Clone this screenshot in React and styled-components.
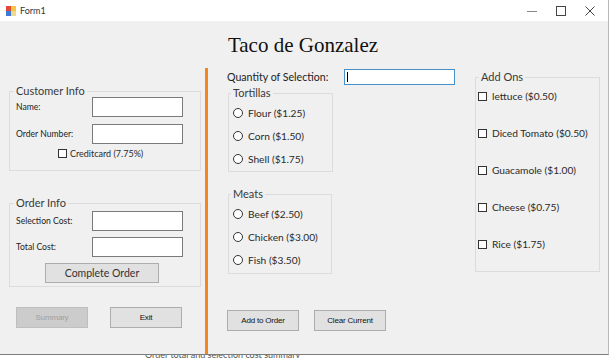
import React from 'react'
import styled, { createGlobalStyle } from 'styled-components'

const GlobalStyle = createGlobalStyle`
  body {
    margin: 0;
    background: #ffffff;
    font-family: Lato, "Open Sans", sans-serif;
  }
`

const Window = styled.div`
  width: 608px;
  height: 354px;
  display: flex;
  flex-direction: column;
  border-right: 1px solid #b9b9b9;
  border-bottom: 1px solid #7c7c7c;
`

const TitleBar = styled.div`
  height: 21px;
  flex: none;
  background: #ffffff;
  display: flex;
  align-items: center;
  padding-left: 6px;
  font-size: 9px;
  color: #333;
`

const TitleText = styled.span`
  margin-left: 4px;
  flex: 1;
`

const WinButton = styled.div`
  width: 29px;
  height: 21px;
  display: flex;
  align-items: center;
  justify-content: center;
  margin-right: ${p => p.$last ? '4px' : '0'};
`

const Content = styled.div`
  flex: 1;
  background: #f0f0f0;
  display: flex;
  flex-direction: column;
  padding-top: 12px;
  min-height: 0;
`

const Heading = styled.h1`
  margin: 0;
  text-align: center;
  font-family: "Liberation Serif", "Times New Roman", serif;
  font-weight: normal;
  font-size: 21px;
  line-height: 24px;
  color: #111;
  padding-right: 2px;
`

const MainRow = styled.div`
  flex: 1;
  display: flex;
  margin-top: 11px;
`

const LeftColumn = styled.div`
  width: 192px;
  margin-left: 9px;
  display: flex;
  flex-direction: column;
`

const Divider = styled.div`
  width: 3px;
  margin-left: 4px;
  background: #f5861f;
`

const MiddleColumn = styled.div`
  width: 229px;
  margin-left: 19px;
  display: flex;
  flex-direction: column;
`

const RightColumn = styled.div`
  margin-left: 19px;
  margin-top: 3px;
`

const Group = styled.fieldset`
  margin: ${p => p.$top || 0}px 0 0 ${p => p.$left || 0}px;
  width: ${p => p.$width}px;
  box-sizing: border-box;
  border: 1px solid #dcdcdc;
  padding: ${p => p.$pad || '0 0 0 6px'};
  display: flex;
  flex-direction: column;
  gap: ${p => p.$gap || 0}px;
`

const Legend = styled.legend`
  padding: 0 2px;
  margin-left: ${p => p.$left ?? -2}px;
  font-size: 11px;
  line-height: 12px;
  color: #3a3a3a;
`

const FieldRow = styled.div`
  display: flex;
  align-items: center;
  margin-top: ${p => p.$top || 0}px;
`

const FieldLabel = styled.span`
  width: ${p => p.$width || 76}px;
  font-size: ${p => p.$size || 8.6}px;
  color: #222;
`

const TextBox = styled.div`
  width: ${p => p.$width || 91}px;
  height: ${p => p.$height || 20}px;
  box-sizing: border-box;
  background: #fff;
  border: 1px solid ${p => p.$focus ? '#4a90c8' : '#7a7a7a'};
  position: relative;
  ${p => p.$focus && `
    &::after {
      content: '';
      position: absolute;
      left: 2px;
      top: 2px;
      bottom: 2px;
      width: 1px;
      background: #000;
    }
  `}
`

const Option = styled.label`
  display: flex;
  align-items: center;
  height: 14px;
  gap: ${p => p.$gap || 5}px;
  font-size: ${p => p.$size || 10.2}px;
  color: #2a2a2a;
  white-space: nowrap;
  padding-left: ${p => p.$indent || 0}px;
  margin-top: ${p => p.$top || 0}px;
`

const CheckBox = styled.span`
  width: 9px;
  height: 9px;
  box-sizing: border-box;
  border: 1px solid #333;
  background: #fff;
  flex: none;
`

const Radio = styled.span`
  width: 10px;
  height: 10px;
  box-sizing: border-box;
  border: 1px solid #333;
  border-radius: 50%;
  background: #fff;
  flex: none;
`

const Button = styled.div`
  width: ${p => p.$width || 72}px;
  height: ${p => p.$height || 21}px;
  box-sizing: border-box;
  display: flex;
  align-items: center;
  justify-content: center;
  background: ${p => p.$disabled ? '#cccccc' : '#e1e1e1'};
  border: 1px solid ${p => p.$disabled ? '#bfbfbf' : '#adadad'};
  color: ${p => p.$disabled ? '#a0a0a0' : p.$big ? '#333' : '#111'};
  font-family: ${p => p.$big ? 'Lato, "Open Sans", sans-serif' : '"Liberation Sans", Arial, sans-serif'};
  font-size: ${p => p.$big ? 10.5 : 8}px;
  letter-spacing: ${p => p.$big ? '0' : '-0.2px'};
  margin-left: ${p => p.$left || 0}px;
  margin-top: ${p => p.$top || 0}px;
`

const ButtonRow = styled.div`
  display: flex;
  gap: ${p => p.$gap}px;
  margin-top: ${p => p.$top}px;
  padding-left: ${p => p.$left || 0}px;
`

const BelowStrip = styled.div`
  height: 3px;
  overflow: hidden;
  padding-left: 145px;
  font-size: 9px;
  line-height: 9px;
  color: #555;
  & span {
    display: block;
    margin-top: -5px;
  }
`

const AppIcon = () => (
  <svg width="10" height="10" viewBox="0 0 10 10">
    <rect x="0" y="0" width="5" height="5" fill="#e2483a" />
    <rect x="5" y="0" width="5" height="5" fill="#f4c443" />
    <rect x="0" y="5" width="5" height="5" fill="#3d7ad6" />
    <rect x="5" y="5" width="5" height="5" fill="#f0d98a" />
  </svg>
)

const tortillas = ['Flour ($1.25)', 'Corn ($1.50)', 'Shell ($1.75)']
const meats = ['Beef ($2.50)', 'Chicken ($3.00)', 'Fish ($3.50)']
const addOns = ['lettuce ($0.50)', 'Diced Tomato ($0.50)', 'Guacamole ($1.00)', 'Cheese ($0.75)', 'Rice ($1.75)']

export default function App() {
  return (
    <>
      <GlobalStyle />
      <Window>
        <TitleBar>
          <AppIcon />
          <TitleText>Form1</TitleText>
          <WinButton>
            <svg width="10" height="10" viewBox="0 0 10 10"><path d="M0 5.5h10" stroke="#888" strokeWidth="1" /></svg>
          </WinButton>
          <WinButton>
            <svg width="10" height="10" viewBox="0 0 10 10"><rect x="0.5" y="0.5" width="9" height="9" fill="none" stroke="#444" strokeWidth="1" /></svg>
          </WinButton>
          <WinButton $last>
            <svg width="10" height="10" viewBox="0 0 10 10"><path d="M0.5 0.5l9 9M9.5 0.5l-9 9" stroke="#444" strokeWidth="1" /></svg>
          </WinButton>
        </TitleBar>
        <Content>
          <Heading>Taco de Gonzalez</Heading>
          <MainRow>
            <LeftColumn>
              <Group $width={192} $top={17} $pad="0 0 10px 6px">
                <Legend>Customer Info</Legend>
                <FieldRow>
                  <FieldLabel>Name:</FieldLabel>
                  <TextBox />
                </FieldRow>
                <FieldRow $top={7}>
                  <FieldLabel>Order Number:</FieldLabel>
                  <TextBox />
                </FieldRow>
                <Option $indent={42} $gap={3} $size={9} $top={2}>
                  <CheckBox />Creditcard (7.75%)
                </Option>
              </Group>
              <Group $width={192} $top={26} $pad="2px 0 3px 6px">
                <Legend>Order Info</Legend>
                <FieldRow>
                  <FieldLabel>Selection Cost:</FieldLabel>
                  <TextBox />
                </FieldRow>
                <FieldRow $top={6}>
                  <FieldLabel>Total Cost:</FieldLabel>
                  <TextBox />
                </FieldRow>
                <Button $big $width={114} $height={20} $left={29} $top={6}>Complete Order</Button>
              </Group>
              <ButtonRow $gap={22} $top={20} $left={7}>
                <Button $disabled>Summary</Button>
                <Button>Exit</Button>
              </ButtonRow>
            </LeftColumn>
            <Divider />
            <MiddleColumn>
              <FieldRow $top={1}>
                <FieldLabel $width={117} $size={10.6}>Quantity of Selection:</FieldLabel>
                <TextBox $focus $width={111} $height={16} />
              </FieldRow>
              <Group $width={105} $top={2} $left={1} $gap={9} $pad="7px 0 5px 4px">
                <Legend>Tortillas</Legend>
                {tortillas.map(t => (
                  <Option key={t}><Radio />{t}</Option>
                ))}
              </Group>
              <Group $width={104} $top={16} $left={1} $gap={9} $pad="7px 0 6px 4px">
                <Legend>Meats</Legend>
                {meats.map(m => (
                  <Option key={m}><Radio />{m}</Option>
                ))}
              </Group>
              <ButtonRow $gap={15} $top={36}>
                <Button>Add to Order</Button>
                <Button>Clear Current</Button>
              </ButtonRow>
            </MiddleColumn>
            <RightColumn>
              <Group $width={125} $gap={23} $pad="6px 0 20px 2px">
                <Legend $left={1}>Add Ons</Legend>
                {addOns.map(a => (
                  <Option key={a}><CheckBox />{a}</Option>
                ))}
              </Group>
            </RightColumn>
          </MainRow>
        </Content>
      </Window>
      <BelowStrip><span>Order total and selection cost summary</span></BelowStrip>
    </>
  )
}
